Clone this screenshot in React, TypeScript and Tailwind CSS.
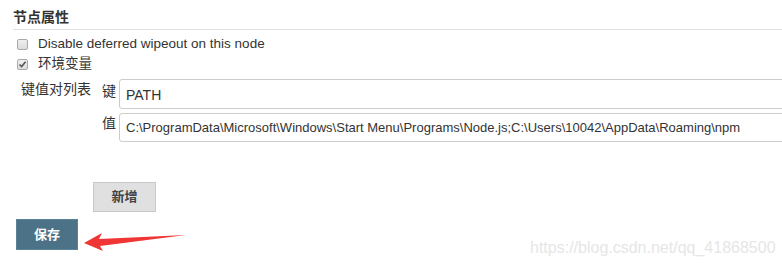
import React from "react";

const font = "font-['Liberation_Sans','Noto_Sans_CJK_SC',sans-serif]";

function Box({ checked }: { checked?: boolean }) {
  return (
    <span className="w-[11px] h-[11px] border border-[#a9a9a9] rounded-[2px] bg-gradient-to-b from-[#f0f0f0] to-[#dcdcdc] flex items-center justify-center shrink-0">
      {checked && (
        <svg width="9" height="9" viewBox="0 0 9 9">
          <path d="M1.5 4.5 L3.6 6.6 L7.6 1.8" fill="none" stroke="#555" strokeWidth="1.6" />
        </svg>
      )}
    </span>
  );
}

export default function App() {
  return (
    <div className={`relative w-[782px] h-[270px] overflow-hidden bg-white text-[#333] ${font}`}>
      {/* Section header */}
      <div className="pl-[13px] pt-[8px]">
        <div className="text-[14px] font-bold leading-[18px] h-[21px]">节点属性</div>
        <div className="h-px bg-[#e0e0e0]" />
      </div>

      {/* Options */}
      <div className="pl-[17px] pt-[6px] flex flex-col gap-[4px] text-[13.5px]">
        <label className="flex items-center gap-[10px] h-[16px]">
          <Box />
          <span>Disable deferred wipeout on this node</span>
        </label>
        <label className="flex items-center gap-[10px] h-[16px]">
          <Box checked />
          <span>环境变量</span>
        </label>
      </div>

      {/* Key / value list */}
      <div className="flex pl-[21px] pt-[7px] text-[14px]">
        <div className="w-[81px] shrink-0 leading-[18px] pt-[1px] whitespace-nowrap">键值对列表</div>
        <div className="flex flex-col gap-[4px] shrink-0">
          <div className="flex">
            <span className="w-[17px] shrink-0 pt-[3px] leading-[18px]">键</span>
            <div className="w-[700px] shrink-0 h-[30px] border border-[#ccc] rounded-[3px] flex items-center pl-[6px] pt-[2px]">
              PATH
            </div>
          </div>
          <div className="flex">
            <span className="w-[17px] shrink-0 pt-[1px] leading-[18px]">值</span>
            <div className="w-[700px] shrink-0 h-[29px] border border-[#ccc] rounded-[3px] flex items-center pl-[6px] whitespace-nowrap text-[13px]">
              C:\ProgramData\Microsoft\Windows\Start Menu\Programs\Node.js;C:\Users\10042\AppData\Roaming\npm
            </div>
          </div>
        </div>
      </div>

      {/* Buttons */}
      <div className="pl-[93px] pt-[40px]">
        <button className="w-[63px] h-[30px] bg-[#e0e0e0] border border-[#c8c8c8] text-[13px] font-bold text-[#444]">
          新增
        </button>
      </div>
      <div className="pl-[16px] pt-[7px]">
        <button className="w-[62px] h-[31px] bg-[#4b7287] border border-[#5b8398] text-[13px] font-bold text-white">
          保存
        </button>
      </div>

      {/* Red arrow annotation */}
      <svg className="absolute left-[82px] top-[230px]" width="108" height="22" viewBox="0 0 108 22">
        <path d="M2 13 L20 3 L17 9 L104 5 L18 16 L21 21 Z" fill="#f03535" />
      </svg>

      {/* Watermark */}
      <div className="absolute left-[530px] top-[236px] text-[16px] text-[#e6e6e6] font-['Liberation_Sans',sans-serif]">
        https://blog.csdn.net/qq_41868500
      </div>
    </div>
  );
}
